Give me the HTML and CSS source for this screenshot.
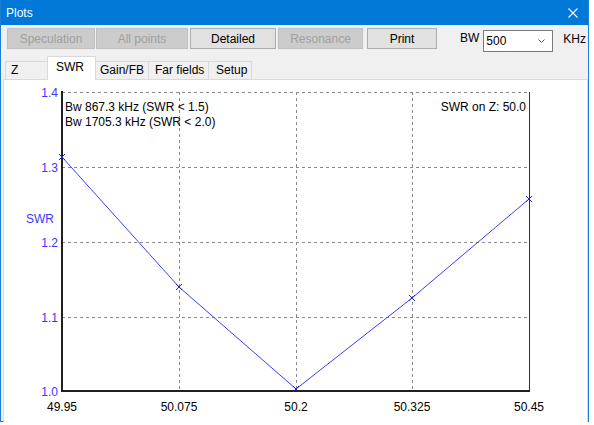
FILE: index.html
```html
<!DOCTYPE html>
<html>
<head>
<meta charset="utf-8">
<title>Plots</title>
<link rel="stylesheet" href="styles.css">
</head>
<body>
<div class="window">
  <div class="titlebar">
    <span class="title">Plots</span>
    <svg class="close" width="10" height="10" viewBox="0 0 10 10"><path d="M0.5 0.5 L9.5 9.5 M9.5 0.5 L0.5 9.5" stroke="#fff" stroke-width="1.1" fill="none"/></svg>
  </div>
  <div class="toolbar">
    <button class="btn disabled w-spec">Speculation</button>
    <button class="btn disabled w-all">All points</button>
    <button class="btn w-det">Detailed</button>
    <button class="btn disabled w-res">Resonance</button>
    <button class="btn w-print">Print</button>
    <span class="bw-label">BW</span>
    <div class="combo"><span>500</span><svg width="7" height="4" viewBox="0 0 7 4"><path d="M0.5 0.5 L3.5 3.5 L6.5 0.5" stroke="#555" fill="none"/></svg></div>
    <span class="unit">KHz</span>
  </div>
  <div class="tabs">
    <div class="tab t-z">Z</div>
    <div class="tab t-swr active">SWR</div>
    <div class="tab t-gain">Gain/FB</div>
    <div class="tab t-far">Far fields</div>
    <div class="tab t-setup">Setup</div>
  </div>
  <div class="panel">
    <svg class="plot" width="583" height="342" viewBox="4 78 583 342">
      <g class="grid">
        <line x1="62" y1="90.5" x2="529" y2="90.5"/>
        <line x1="62" y1="165.5" x2="529" y2="165.5"/>
        <line x1="62" y1="240.5" x2="529" y2="240.5"/>
        <line x1="62" y1="315.5" x2="529" y2="315.5"/>
        <line x1="179.5" y1="90" x2="179.5" y2="389"/>
        <line x1="296.5" y1="90" x2="296.5" y2="389"/>
        <line x1="412.5" y1="90" x2="412.5" y2="389"/>
      </g>
      <line class="frame" x1="529.5" y1="90" x2="529.5" y2="390"/>
      <line class="axis" x1="62" y1="89" x2="62" y2="390"/>
      <line class="axis" x1="61" y1="389" x2="530" y2="389"/>
      <polyline class="curve" points="62,155 179,285 296,387 412,296 529,197"/>
      <g class="marks">
        <path d="M59 152 L65 158 M65 152 L59 158"/>
        <path d="M176 282 L182 288 M182 282 L176 288"/>
        <path d="M293 384 L299 390 M299 384 L293 390"/>
        <path d="M409 293 L415 299 M415 293 L409 299"/>
        <path d="M526 194 L532 200 M532 194 L526 200"/>
      </g>
      <g class="ylab">
        <text x="58" y="95">1.4</text>
        <text x="58" y="170">1.3</text>
        <text x="58" y="245">1.2</text>
        <text x="58" y="320">1.1</text>
        <text x="58" y="394">1.0</text>
      </g>
      <text class="yname" x="26" y="221">SWR</text>
      <g class="xlab">
        <text x="62" y="409">49.95</text>
        <text x="179" y="409">50.075</text>
        <text x="296" y="409">50.2</text>
        <text x="412" y="409">50.325</text>
        <text x="529" y="409">50.45</text>
      </g>
      <text class="note" x="65" y="109">Bw 867.3 kHz (SWR &lt; 1.5)</text>
      <text class="note" x="65" y="124">Bw 1705.3 kHz (SWR &lt; 2.0)</text>
      <text class="note end" x="526" y="109">SWR on Z: 50.0</text>
    </svg>
  </div>
</div>
</body>
</html>
```

FILE: styles.css
```css
html, body {
  margin: 0;
  padding: 0;
  background: #ffffff;
}

body {
  font-family: "Liberation Sans", Arial, sans-serif;
  font-size: 12px;
  color: #000;
}

.window {
  width: 589px;
  height: 422px;
  box-sizing: border-box;
  border: 1px solid #1c7fd6;
  border-top: none;
  background: #f0f0f0;
  display: flex;
  flex-direction: column;
}

.titlebar {
  height: 25px;
  flex: none;
  background: #0078d7;
  color: #fff;
  display: flex;
  align-items: center;
  justify-content: space-between;
  padding: 0 10px 0 5px;
}

.title {
  font-size: 12px;
  line-height: 14px;
  padding-top: 1px;
}

.close {
  display: block;
}

.toolbar {
  flex: none;
  display: flex;
  align-items: flex-start;
  margin-top: 3px;
  padding-left: 6px;
  height: 24px;
}

.btn {
  height: 21px;
  box-sizing: border-box;
  border: 1px solid #adadad;
  background: #e1e1e1;
  font-family: "Liberation Sans", Arial, sans-serif;
  font-size: 12px;
  color: #000;
  padding: 0;
  margin: 0;
  line-height: 18px;
}

.btn.disabled {
  background: #cccccc;
  border-color: #bfbfbf;
  color: #a0a0a0;
}

.w-spec { width: 88px; }
.w-all { width: 92px; margin-left: 1px; }
.w-det { width: 86px; margin-left: 2px; }
.w-res { width: 85px; margin-left: 2px; }
.w-print { width: 70px; margin-left: 4px; }

.bw-label {
  margin-left: 23px;
  line-height: 21px;
  font-size: 12px;
}

.combo {
  margin-left: 4px;
  margin-top: 2px;
  width: 70px;
  height: 22px;
  box-sizing: border-box;
  border: 1px solid #7a7a7a;
  background: #fff;
  display: flex;
  align-items: center;
  justify-content: space-between;
  padding: 0 7px 0 2px;
}

.combo span {
  line-height: 18px;
}

.combo svg {
  display: block;
}

.unit {
  margin-left: 10px;
  line-height: 22px;
}

.tabs {
  flex: none;
  display: flex;
  align-items: flex-end;
  margin-top: 4px;
  padding-left: 4px;
  height: 24px;
  margin-bottom: -1px;
}

.tab {
  box-sizing: border-box;
  height: 19px;
  border: 1px solid #d9d9d9;
  border-bottom: none;
  background: #f0f0f0;
  line-height: 17px;
  padding-left: 5px;
  white-space: nowrap;
}

.tab + .tab {
  margin-left: -1px;
}

.tab.active {
  height: 24px;
  background: #fff;
  line-height: 17px;
  padding-top: 2px;
  position: relative;
  z-index: 1;
}

.t-z { width: 43px; }
.t-swr { width: 49px; padding-left: 8px; }
.t-gain { width: 54px; padding-left: 4px; }
.t-far { width: 61px; padding-left: 6px; }
.t-setup { width: 44px; padding-left: 7px; }

.panel {
  flex: none;
  margin-left: 2px;
  width: 585px;
  height: 344px;
  box-sizing: border-box;
  border: 1px solid #d9d9d9;
  background: #fff;
}

.plot {
  display: block;
  font-family: "Liberation Sans", Arial, sans-serif;
  font-size: 12px;
}

.grid line {
  stroke: #8a8a8a;
  stroke-width: 1;
  stroke-dasharray: 3 3;
}

.frame {
  stroke: #303030;
  stroke-width: 1;
}

.axis {
  stroke: #202020;
  stroke-width: 2;
}

.curve {
  fill: none;
  stroke: #3c3cff;
  stroke-width: 1;
}

.marks path {
  stroke: #2020e0;
  stroke-width: 1;
  fill: none;
}

.ylab text {
  fill: #3838ff;
  text-anchor: end;
}

.yname {
  fill: #3838ff;
}

.xlab text {
  fill: #000;
  text-anchor: middle;
}

.note {
  fill: #000;
}

.note.end {
  text-anchor: end;
}
```
